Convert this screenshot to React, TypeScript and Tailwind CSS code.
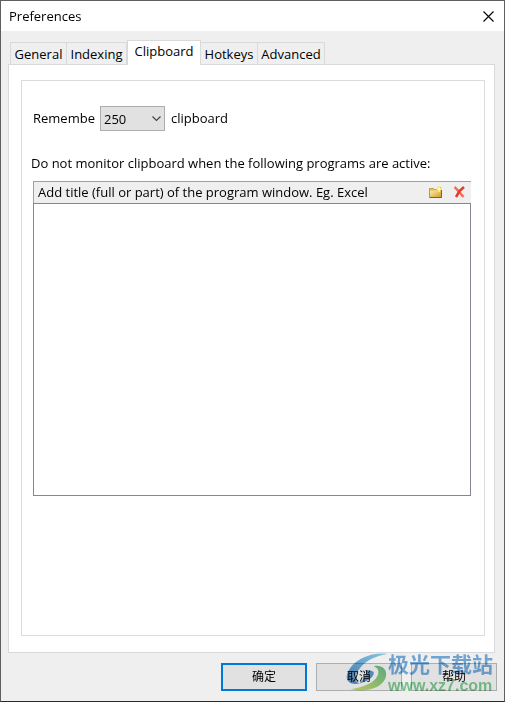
import React, { useState } from 'react';

const tabs = [
  { name: 'General', width: 'w-[57px]' },
  { name: 'Indexing', width: 'w-[60px]' },
  { name: 'Clipboard', width: 'w-[74px]' },
  { name: 'Hotkeys', width: 'w-[57px]' },
  { name: 'Advanced', width: 'w-[67px]' }
];

const Watermark: React.FC = () => (
  <div className="pointer-events-none absolute right-[11px] bottom-[5px] flex items-start opacity-75 mix-blend-multiply">
    <svg width="42" height="42" viewBox="0 0 44 42" aria-hidden="true">
      <defs>
        <linearGradient id="swoosh-blue" x1="1" y1="0" x2="0" y2="1">
          <stop offset="0" stopColor="#65c4ed" />
          <stop offset="1" stopColor="#1769b8" />
        </linearGradient>
        <linearGradient id="swoosh-green" x1="1" y1="0" x2="0" y2="1">
          <stop offset="0" stopColor="#35a86b" />
          <stop offset="1" stopColor="#c3dc32" />
        </linearGradient>
      </defs>
      <path d="M43 1C26-1 8 7 2 20c-4 9 2 14 12 12-6-3-6-7-1-14C19 9 30 3 43 1Z" fill="url(#swoosh-blue)" />
      <path d="M14 32c9-2 16-7 15-12-2-2-5-2-9-2 3 3-1 9-6 14Z" fill="#2b78bd" />
      <path d="M29 14c5 2 6 6 4 10-3 7-14 12-28 14 18 4 35-2 37-14 1-8-6-12-13-10Z" fill="url(#swoosh-green)" />
    </svg>
    <div className="flex flex-col">
      <span className="text-[21px] leading-6 font-bold text-[#4a93d4]">极光下载站</span>
      <span className="font-['Liberation_Sans',sans-serif] text-base leading-5 font-bold text-[#55bd73]">www.xz7.com</span>
    </div>
  </div>
);

const App: React.FC = () => {
  const [activeTab, setActiveTab] = useState('Clipboard');
  const [programs, setPrograms] = useState('');

  return (
    <div className="relative flex min-h-screen flex-col border border-[#5f5f5f] border-b-[#292929] bg-[#efefef] font-['Open_Sans','Noto_Sans_CJK_SC',sans-serif] text-[13px] leading-5 text-black">
      <header className="flex h-[30px] items-center justify-between bg-white pr-2 pl-2">
        <h1>Preferences</h1>
        <button aria-label="Close" className="flex h-4 w-4 items-center justify-center">
          <svg width="11" height="11" viewBox="0 0 11 11" stroke="black" strokeWidth="1.1">
            <path d="M.5.5l10 10M10.5.5l-10 10" />
          </svg>
        </button>
      </header>

      <main className="flex flex-1 flex-col px-[7px] pt-[9px] pr-[9px]">
        <nav role="tablist" className="relative z-10 flex items-end pl-[2px]">
          {tabs.map((tab) => (
            <button
              key={tab.name}
              role="tab"
              aria-selected={activeTab === tab.name}
              onClick={() => setActiveTab(tab.name)}
              className={`${tab.width} whitespace-nowrap border-t border-r border-[#d9d9d9] first:border-l ${
                activeTab === tab.name
                  ? '-mb-px h-[25px] border-l bg-white pb-1'
                  : 'h-[22px] bg-[#efefef]'
              }`}
            >
              {tab.name}
            </button>
          ))}
        </nav>

        <section className="flex flex-1 flex-col border border-[#d9d9d9] bg-white px-3 pt-[15px] pb-4 pr-[9px]">
          <div className="flex flex-1 flex-col border border-[#dcdcdc] px-[11px] pt-[25px] pr-[13px]">
            <div className="flex items-center">
              <label htmlFor="remember" className="w-[62px] overflow-hidden pb-px whitespace-nowrap">Remember</label>
              <div className="relative ml-[5px]">
                <select
                  id="remember"
                  defaultValue="250"
                  className="block h-[25px] w-[65px] appearance-none border border-[#adadad] bg-[#e1e1e1] pl-[3px] outline-none"
                >
                  <option>50</option>
                  <option>100</option>
                  <option>250</option>
                  <option>500</option>
                </select>
                <svg className="pointer-events-none absolute top-[10px] right-1" width="9" height="6" viewBox="0 0 9 6" fill="none" stroke="#444" strokeWidth="1.2">
                  <path d="M.5.5l4 4 4-4" />
                </svg>
              </div>
              <span className="ml-[6px] pb-px">clipboard</span>
            </div>

            <label htmlFor="programs" className="-ml-[2px] mt-[22px]">
              Do not monitor clipboard when the following programs are active:
            </label>

            <div className="mt-2 flex h-[22px] items-center border-t border-l border-[#a0a0a0] bg-[#efefef] pr-[6px] pb-px pl-1">
              <span className="flex-1 whitespace-nowrap">Add title (full or part) of the program window. Eg. Excel</span>
              <button aria-label="Add program" className="mr-3">
                <svg width="13" height="12" viewBox="0 0 13 12">
                  <defs>
                    <linearGradient id="folder" x1="0" y1="0" x2="1" y2="1">
                      <stop offset="0" stopColor="#fff2a8" />
                      <stop offset="1" stopColor="#cf9f28" />
                    </linearGradient>
                  </defs>
                  <path d="M.5 11V2.5h4l1 1h3V2h4v9z" fill="#e6c663" stroke="#b59a55" />
                  <path d="M1 5h4l1-1h6v7H1z" fill="url(#folder)" />
                  <path d="M.5 11.5h12V4" fill="none" stroke="#75622f" />
                  <path d="M10 0v6M7.5 3H13" stroke="#ffe878" strokeWidth="2" />
                  <path d="M9 2h2v2H9z" fill="#fffbd9" />
                </svg>
              </button>
              <button aria-label="Delete program" onClick={() => setPrograms('')}>
                <svg width="11" height="12" viewBox="0 0 11 12" fill="none" strokeWidth="2.5">
                  <path d="M.5 1l4 4 5 6" stroke="#f06e59" />
                  <path d="M10 1L5.5 5 2 11" stroke="#e53c25" />
                </svg>
              </button>
            </div>
            <textarea
              id="programs"
              value={programs}
              onChange={(e) => setPrograms(e.target.value)}
              className="h-[293px] w-full resize-none border border-[#828790] bg-white p-1 outline-none"
            />
          </div>
        </section>
      </main>

      <footer className="flex justify-end gap-[9px] pt-[10px] pr-[7px] pb-[10px]">
        <button className="h-7 w-[86px] border-2 border-[#0078d7] bg-[#e1e1e1] text-xs">确定</button>
        <button className="h-7 w-[86px] border border-[#adadad] bg-[#e1e1e1] text-xs">取消</button>
        <button className="h-7 w-[86px] border border-[#adadad] bg-[#e1e1e1] text-xs">帮助</button>
      </footer>
      <Watermark />
    </div>
  );
};

export default App;
